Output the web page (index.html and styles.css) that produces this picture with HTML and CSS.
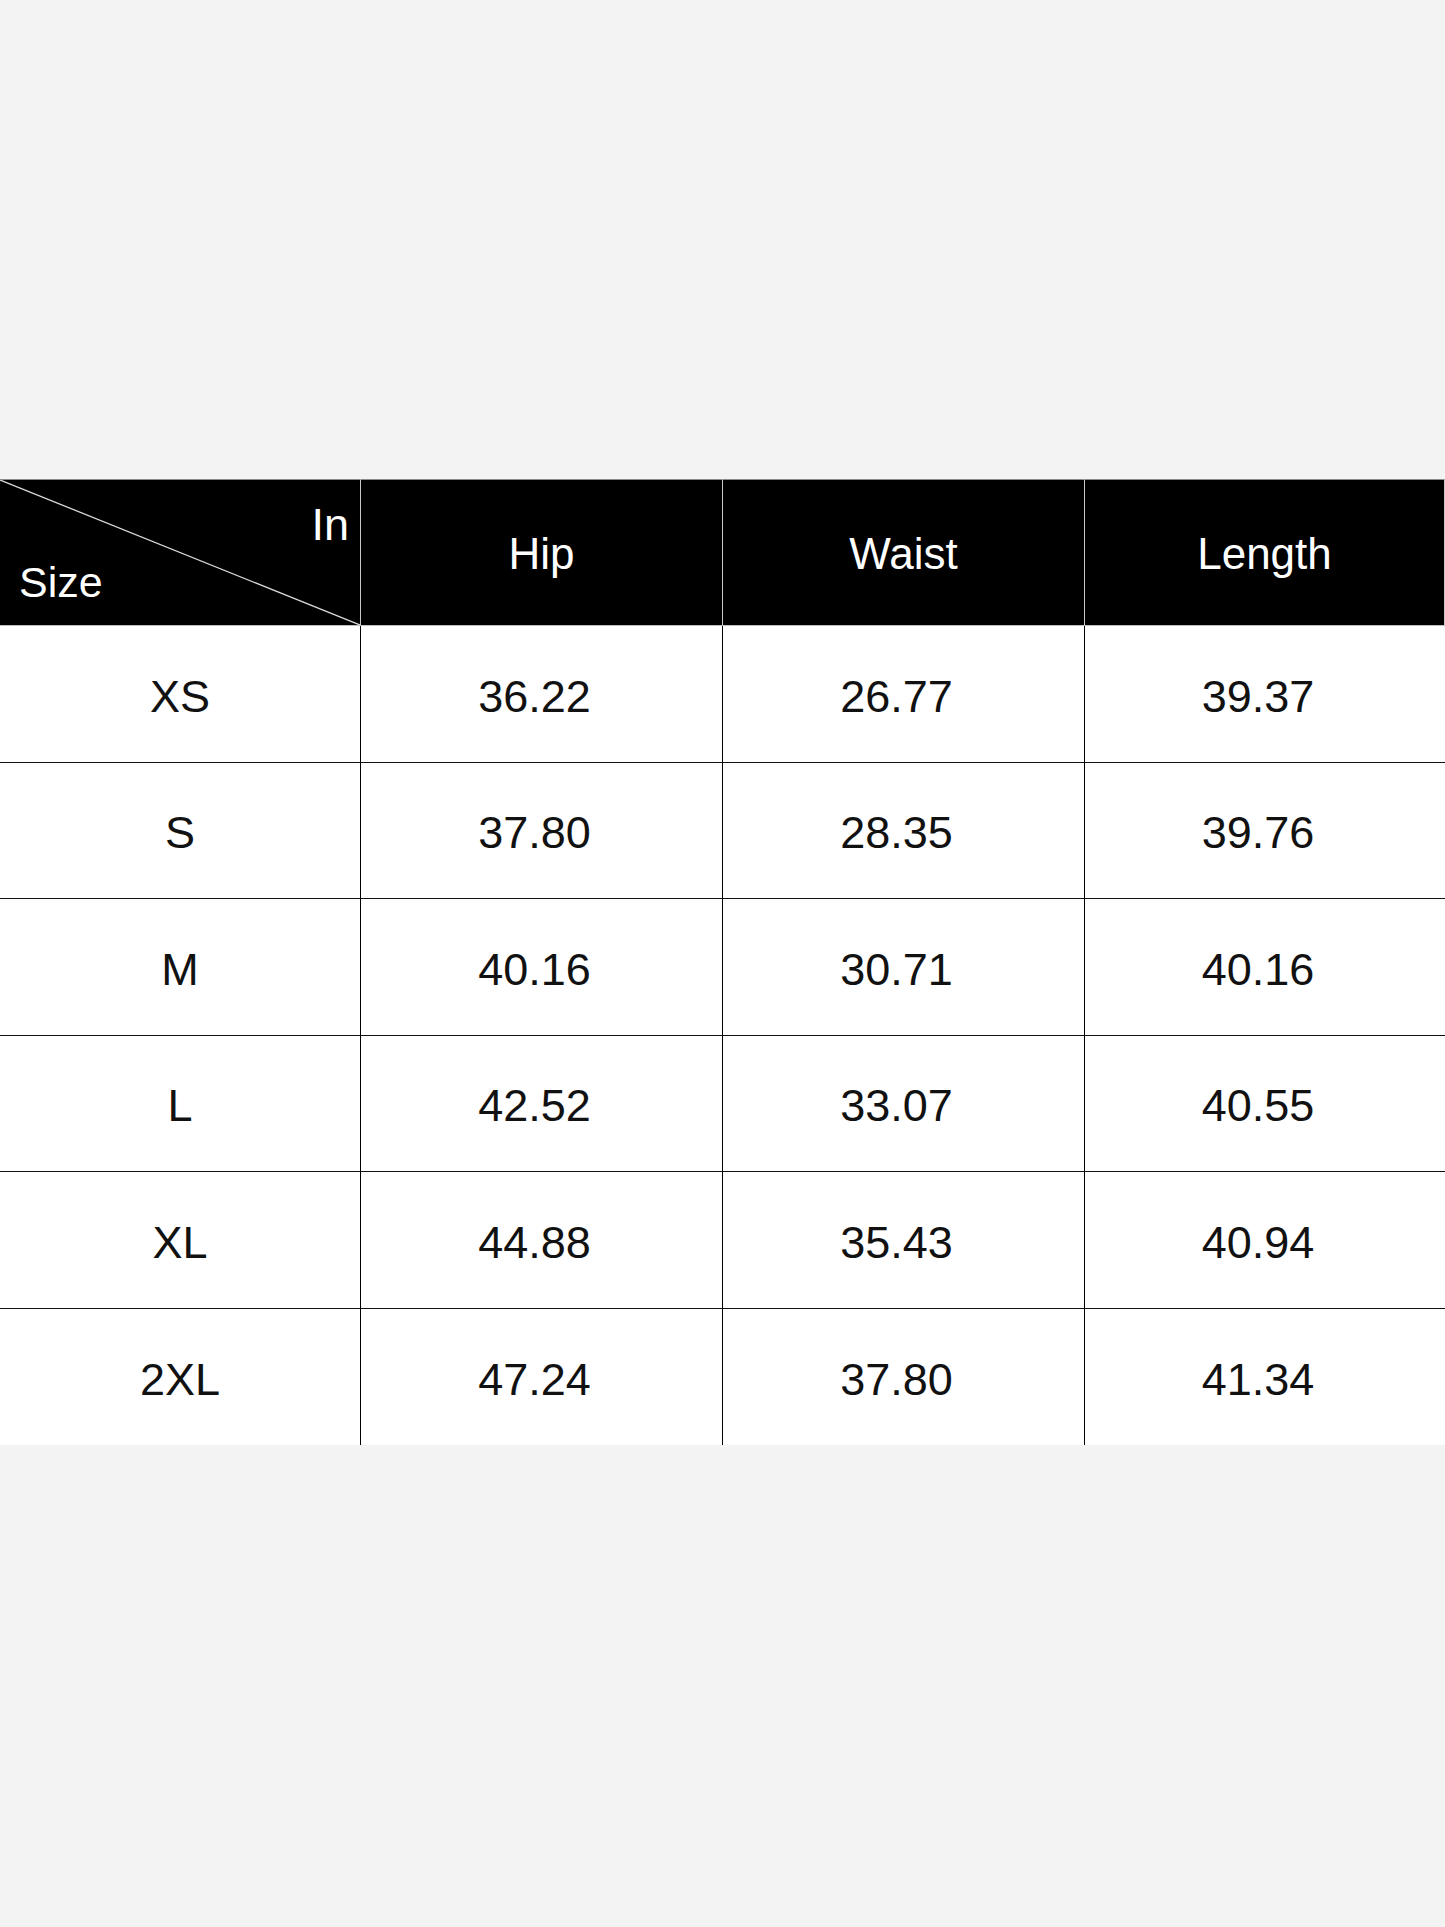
FILE: index.html
```html
<!DOCTYPE html>
<html lang="en">
<head>
<meta charset="utf-8">
<title>Size Chart</title>
<link rel="stylesheet" href="styles.css">
</head>
<body>
<main class="page">
  <div class="chart">
    <div class="cell head corner">
      <svg class="diag" viewBox="0 0 100 100" preserveAspectRatio="none"><line x1="0" y1="0" x2="100" y2="100" vector-effect="non-scaling-stroke"/></svg>
      <span class="unit">In</span>
      <span class="size-label">Size</span>
    </div>
    <div class="cell head">Hip</div>
    <div class="cell head">Waist</div>
    <div class="cell head">Length</div>

    <div class="cell size">XS</div><div class="cell num">36.22</div><div class="cell num">26.77</div><div class="cell num">39.37</div>
    <div class="cell size">S</div><div class="cell num">37.80</div><div class="cell num">28.35</div><div class="cell num">39.76</div>
    <div class="cell size">M</div><div class="cell num">40.16</div><div class="cell num">30.71</div><div class="cell num">40.16</div>
    <div class="cell size">L</div><div class="cell num">42.52</div><div class="cell num">33.07</div><div class="cell num">40.55</div>
    <div class="cell size">XL</div><div class="cell num">44.88</div><div class="cell num">35.43</div><div class="cell num">40.94</div>
    <div class="cell size">2XL</div><div class="cell num">47.24</div><div class="cell num">37.80</div><div class="cell num">41.34</div>
  </div>
</main>
</body>
</html>
```
FILE: styles.css
```css
html, body {
  margin: 0;
  padding: 0;
  background: #f3f3f3;
}

.page {
  padding-top: 479px;
  min-height: 1927px;
  box-sizing: border-box;
  font-family: "Liberation Sans", Arial, sans-serif;
}

.chart {
  display: grid;
  grid-template-columns: 361px 362px 362px 1fr;
  grid-template-rows: 147px repeat(6, 136.5px);
  background: #ffffff;
  width: 1445px;
}

.cell {
  display: flex;
  align-items: center;
  justify-content: center;
  box-sizing: border-box;
  color: #111;
  font-size: 45px;
  line-height: 1;
}

.head {
  background: #000;
  color: #fff;
  font-size: 44px;
  padding-top: 3px;
  border-top: 1px solid #8a8a8a;
  border-bottom: 1px solid #bdbdbd;
  border-right: 1px solid #c8c8c8;
}

.head:last-of-type {
  border-right: none;
}

.corner {
  position: relative;
  flex-direction: column;
  align-items: stretch;
  justify-content: space-between;
  padding: 22px 11px 21px 19px;
}

.diag {
  position: absolute;
  left: 0;
  top: 0;
  width: 100%;
  height: 100%;
}

.diag line {
  stroke: #d9d9d9;
  stroke-width: 1.3;
}

.unit {
  position: relative;
  align-self: flex-end;
  font-size: 45px;
}

.size-label {
  position: relative;
  align-self: flex-start;
  font-size: 43px;
}

.size, .num {
  padding-top: 5px;
  border-right: 1.5px solid #000;
  border-bottom: 1.5px solid #111;
}

.num {
  padding-right: 14px;
}

.num:nth-child(4n) {
  border-right: none;
}

.chart > .cell:nth-last-child(-n+4) {
  border-bottom: none;
}
```
